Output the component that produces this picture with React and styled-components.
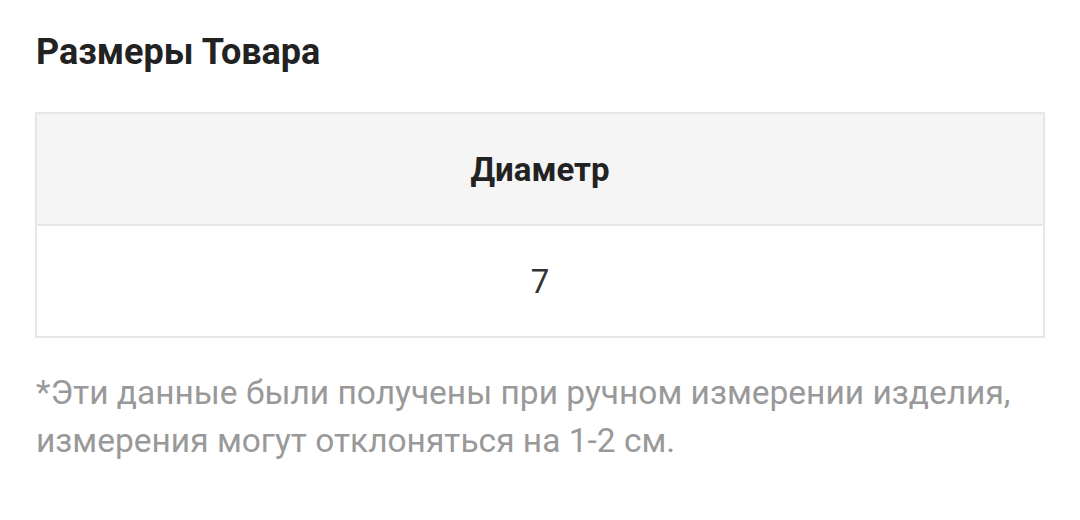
import React from "react";
import styled, { createGlobalStyle } from "styled-components";

const GlobalStyle = createGlobalStyle`
  body {
    margin: 0;
    background: #fff;
    font-family: Roboto, "Noto Sans", sans-serif;
  }
`;

const Page = styled.div`
  width: 1080px;
  height: 520px;
  padding: 28px 35px 0 35px;
  box-sizing: border-box;
`;

const Title = styled.h2`
  margin: 0 0 0 1px;
  font-size: 36px;
  line-height: 48px;
  font-weight: 700;
  color: #222;
`;

const Table = styled.table`
  margin-top: 36px;
  width: 100%;
  border-collapse: collapse;
  border: 2px solid #e6e6e6;
`;

const Cell = styled.td`
  height: 110px;
  text-align: center;
  vertical-align: middle;
  font-size: 33px;
  color: ${(p) => (p.$head ? "#222" : "#333")};
  font-weight: ${(p) => (p.$head ? 700 : 400)};
  background: ${(p) => (p.$head ? "#f5f5f5" : "#fff")};
  border: 2px solid #e6e6e6;
  padding: 0;
`;

const Note = styled.p`
  margin: 31px 0 0 1px;
  font-size: 33.5px;
  line-height: 48px;
  color: #999;
`;

export default function App() {
  return (
    <>
      <GlobalStyle />
      <Page>
        <Title>Размеры Товара</Title>
        <Table>
          <tbody>
            <tr>
              <Cell $head>Диаметр</Cell>
            </tr>
            <tr>
              <Cell>7</Cell>
            </tr>
          </tbody>
        </Table>
        <Note>
          *Эти данные были получены при ручном измерении изделия,
          <br />
          измерения могут отклоняться на 1-2 см.
        </Note>
      </Page>
    </>
  );
}
